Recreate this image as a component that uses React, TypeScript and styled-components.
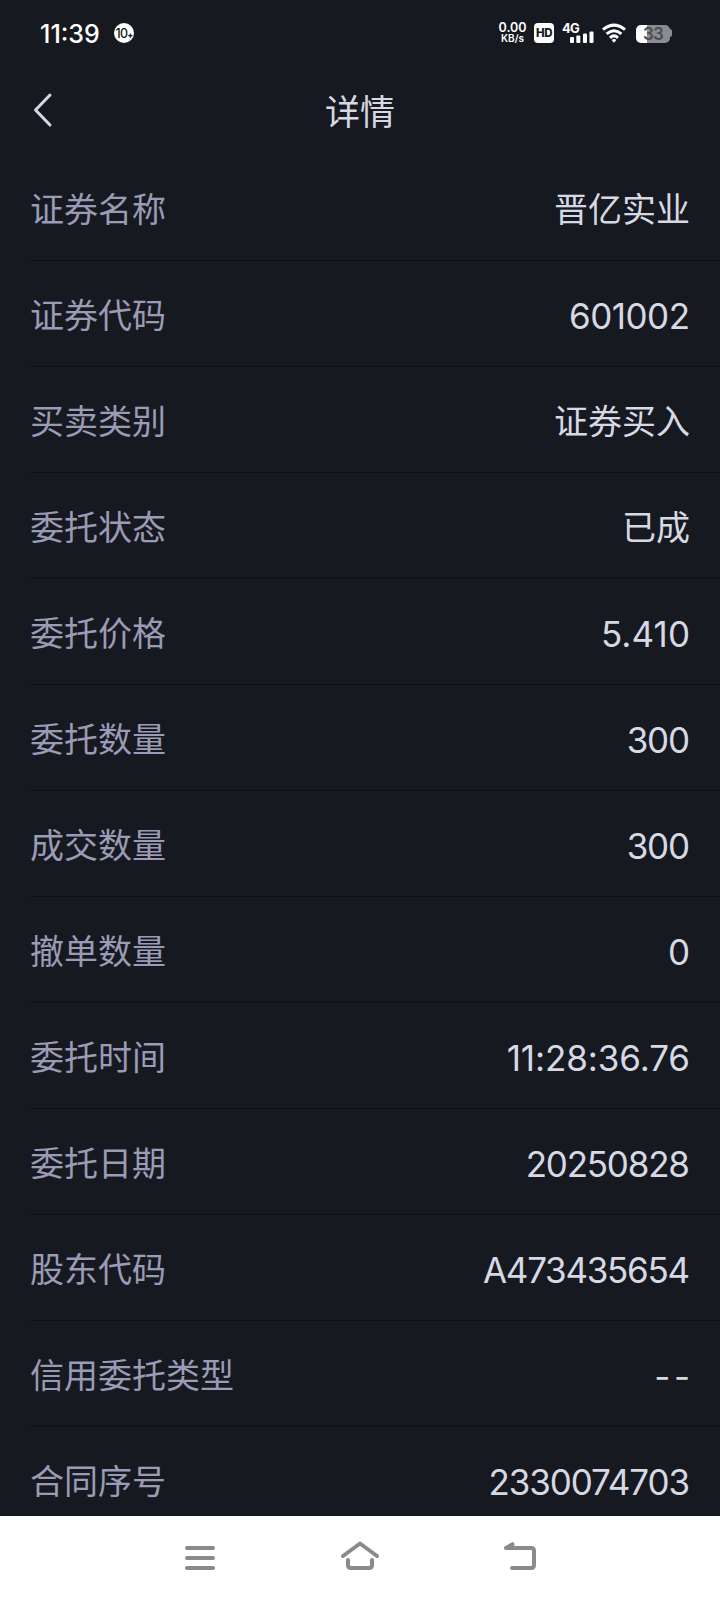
import React from "react";
import styled, { createGlobalStyle } from "styled-components";

const GlobalStyle = createGlobalStyle`
  * { box-sizing: border-box; }
  body { margin: 0; background: #171921; }
`;

const Screen = styled.main`
  display: flex;
  flex-direction: column;
  width: 720px;
  height: 1600px;
  overflow: hidden;
  background: #171921;
  color: #d6d9e4;
  font-family: Inter, "Noto Sans CJK SC", sans-serif;
`;

const StatusBar = styled.div`
  flex: none;
  display: flex;
  align-items: center;
  height: 66px;
  padding: 0 48px 0 40px;
  color: #fff;
`;

const Clock = styled.span`
  width: 74px;
  font-size: 25px;
  font-weight: 500;
  line-height: 30px;
  padding-top: 2px;
  white-space: nowrap;
`;

const CountBadge = styled.span`
  display: flex;
  align-items: center;
  justify-content: center;
  width: 20px;
  height: 20px;
  border-radius: 50%;
  background: #fff;
  color: #171921;
  font-size: 12.5px;
  font-weight: 500;
  letter-spacing: -0.6px;
`;

const Plus = styled.span`
  align-self: flex-end;
  margin-bottom: 3px;
  font-size: 8px;
  font-weight: 900;
`;

const Indicators = styled.div`
  display: flex;
  align-items: center;
  margin-left: auto;
`;

const Speed = styled.div`
  display: flex;
  flex-direction: column;
  align-items: center;
  width: 27px;
  margin-right: 8px;
  font-weight: 600;
`;

const SpeedText = styled.span<{ $size: number }>`
  font-size: ${(p) => p.$size}px;
  line-height: 10.5px;
  white-space: nowrap;
`;

const HdBadge = styled.span`
  display: flex;
  align-items: center;
  justify-content: center;
  width: 20px;
  height: 20px;
  margin-right: 8px;
  border-radius: 4px;
  background: #fff;
  color: #171921;
  font-size: 11.5px;
  font-weight: 800;
  letter-spacing: -0.4px;
`;

const Signal = styled.div`
  display: flex;
  align-items: flex-end;
  height: 20px;
  width: 32px;
  margin-right: 8px;
`;

const Network = styled.span`
  align-self: flex-start;
  width: 8px;
  font-size: 13px;
  font-weight: 700;
  line-height: 11px;
  letter-spacing: -0.8px;
  white-space: nowrap;
`;

const Battery = styled.div`
  display: flex;
  align-items: center;
  margin-left: 10px;
`;

const BatteryBody = styled.div`
  display: flex;
  align-items: center;
  justify-content: center;
  width: 34px;
  height: 18px;
  margin-top: 1px;
  border-radius: 5px;
  background: linear-gradient(to right, #fff 11px, #8b8c90 11px);
  color: #4b4d53;
  font-size: 17px;
  font-weight: 600;
  letter-spacing: -0.7px;
`;

const BatteryTip = styled.div`
  width: 2px;
  height: 8px;
  border-radius: 0 2px 2px 0;
  background: #8b8c90;
`;

const Header = styled.header`
  flex: none;
  display: grid;
  grid-template-columns: 60px 1fr 60px;
  align-items: center;
  height: 89px;
`;

const BackButton = styled.button`
  display: flex;
  padding: 0 0 2px 32px;
  border: 0;
  background: none;
`;

const Title = styled.h1`
  margin: 0;
  padding-top: 2px;
  font-size: 35px;
  font-weight: 400;
  line-height: 52px;
  text-align: center;
`;

const Details = styled.dl`
  flex: 1;
  min-height: 0;
  overflow: hidden;
  margin: 0;
  padding-left: 30px;
`;

const Row = styled.div`
  display: flex;
  align-items: center;
  justify-content: space-between;
  height: 106px;
  padding-right: 30px;
  border-bottom: 1px solid #0f1017;
`;

const Label = styled.dt`
  padding-top: 4px;
  color: #9a9bb4;
  font-size: 34px;
  line-height: 50px;
`;

const Value = styled.dd<{ $tracking?: number }>`
  margin: 0 ${(p) => -(p.$tracking ?? 0)}px 0 0;
  padding-top: 4px;
  font-size: ${(p) => (p.$tracking === undefined ? 34 : 35)}px;
  letter-spacing: ${(p) => p.$tracking ?? 0}px;
  line-height: 50px;
`;

const NavBar = styled.nav`
  flex: none;
  display: flex;
  justify-content: center;
  gap: 120px;
  height: 84px;
  padding-top: 22px;
  background: #fff;
`;

const NavButton = styled.button`
  display: flex;
  width: 40px;
  height: 40px;
  padding: 0;
  border: 0;
  background: none;
`;

type Entry = { label: string; value: string; tracking?: number };

const rows: Entry[] = [
  { label: "证券名称", value: "晋亿实业" },
  { label: "证券代码", value: "601002", tracking: -0.5 },
  { label: "买卖类别", value: "证券买入" },
  { label: "委托状态", value: "已成" },
  { label: "委托价格", value: "5.410", tracking: 0.1 },
  { label: "委托数量", value: "300", tracking: -1.2 },
  { label: "成交数量", value: "300", tracking: -1.2 },
  { label: "撤单数量", value: "0", tracking: 0 },
  { label: "委托时间", value: "11:28:36.76", tracking: -0.1 },
  { label: "委托日期", value: "20250828", tracking: -1.2 },
  { label: "股东代码", value: "A473435654", tracking: -1.3 },
  { label: "信用委托类型", value: "--", tracking: 3.5 },
  { label: "合同序号", value: "2330074703", tracking: -1.1 },
];

const navIcons = [
  "M7 10H33M7 20H33M7 30H33",
  "M3 18L20 5.5L37 18M8 22V27Q8 30 11 30H29Q32 30 32 27V22",
  "M12.5 6.3L6 10L9 9.5L12.5 6.3M6 10H31Q34 10 34 13V27Q34 30 31 30H12",
];

const NavIcon = ({ d }: { d: string }) => (
  <svg width="40" height="40" viewBox="0 0 40 40" fill="none" stroke="#8a8a8a" strokeWidth="4" strokeLinecap="round" strokeLinejoin="round">
    <path d={d} />
  </svg>
);

export default function App() {
  return (
    <Screen>
      <GlobalStyle />
      <StatusBar>
        <Clock>11:39</Clock>
        <CountBadge>
          10<Plus>+</Plus>
        </CountBadge>
        <Indicators>
          <Speed>
            <SpeedText $size={12.5}>0.00</SpeedText>
            <SpeedText $size={10}>KB/s</SpeedText>
          </Speed>
          <HdBadge>HD</HdBadge>
          <Signal>
            <Network>4G</Network>
            <svg width="24" height="12" viewBox="0 0 24 12" fill="#fff">
              <rect x="0" y="6" width="4" height="6" rx="1" />
              <rect x="6.3" y="4.5" width="4" height="7.5" rx="1" />
              <rect x="13" y="2.5" width="4" height="9.5" rx="1" />
              <rect x="19.5" y="0.5" width="4" height="11.5" rx="1" />
            </svg>
          </Signal>
          <svg width="24" height="20" viewBox="0 0 24 20" fill="none" stroke="#fff" strokeWidth="3">
            <path d="M1 6.6Q12 -2.4 23 6.6M4.6 10.8Q12 4.6 19.4 10.8M8 14.8Q12 11 16 14.8" />
            <path d="M9.6 17Q12 15.2 14.4 17L12 19.8Z" fill="#fff" stroke="none" />
          </svg>
          <Battery>
            <BatteryBody>33</BatteryBody>
            <BatteryTip />
          </Battery>
        </Indicators>
      </StatusBar>
      <Header>
        <BackButton aria-label="返回">
          <svg width="22" height="36" viewBox="0 0 22 36" fill="none" stroke="#d6d9e4" strokeWidth="3" strokeLinecap="round" strokeLinejoin="round">
            <path d="M18 3L3.5 18L18 33" />
          </svg>
        </BackButton>
        <Title>详情</Title>
      </Header>
      <Details>
        {rows.map(({ label, value, tracking }) => (
          <Row key={label}>
            <Label>{label}</Label>
            <Value $tracking={tracking}>{value}</Value>
          </Row>
        ))}
      </Details>
      <NavBar>
        {navIcons.map((d) => (
          <NavButton key={d}>
            <NavIcon d={d} />
          </NavButton>
        ))}
      </NavBar>
    </Screen>
  );
}
